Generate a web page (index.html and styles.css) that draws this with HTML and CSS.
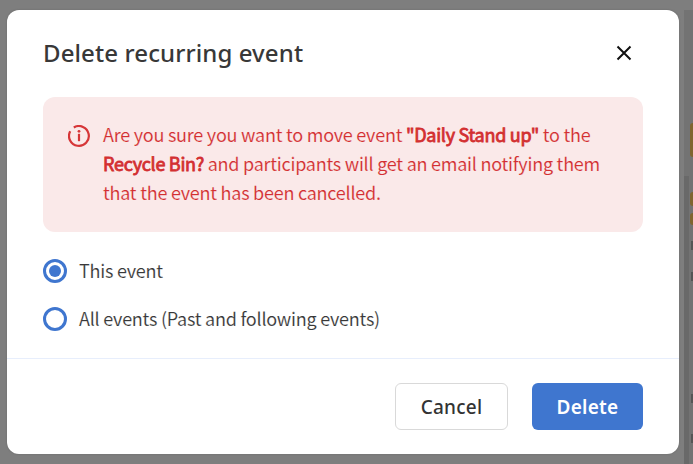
FILE: index.html
```html
<!DOCTYPE html>
<html lang="en">
<head>
<meta charset="utf-8">
<title>Delete recurring event</title>
<link rel="stylesheet" href="styles.css">
</head>
<body>
<div class="backdrop" aria-hidden="true">
  <i class="panel"></i><i class="divider"></i>
  <i class="chip chip-tall"></i><i class="chip chip-mid"></i><i class="chip chip-low"></i>
  <i class="mark mark-a"></i><i class="mark mark-b"></i><i class="mark mark-c"></i><i class="mark mark-d"></i>
</div>
<main class="dialog" role="dialog">
  <header class="header">
    <h1 class="title">Delete recurring event</h1>
    <button class="close" aria-label="Close"><svg width="16" height="16" viewBox="0 0 16 16"><path d="M1.5 1.5l13 13M14.5 1.5l-13 13" fill="none" stroke="#111" stroke-width="2"/></svg></button>
  </header>
  <section class="alert">
    <svg class="info" width="22" height="22" viewBox="0 0 22 22"><path d="M5.8 2.5A9.9 9.9 0 1 1 2.2 6.3" fill="none" stroke="#d63638" stroke-width="2.2"/><path d="M11 8.8v7.4" stroke="#d63638" stroke-width="2.2"/><circle cx="11" cy="6.3" r="1.4" fill="#d63638"/></svg>
    <p class="message"><span class="line">Are you sure you want to move event <b>"Daily Stand up"</b> to the</span> <span class="line"><b>Recycle Bin?</b> and participants will get an email notifying them</span> <span class="line">that the event has been cancelled.</span></p>
  </section>
  <div class="options">
    <label class="option"><span class="radio checked"></span><span>This event</span></label>
    <label class="option"><span class="radio"></span><span>All events (Past and following events)</span></label>
  </div>
  <footer class="footer">
    <button class="button cancel">Cancel</button>
    <button class="button delete">Delete</button>
  </footer>
</main>
</body>
</html>
```
FILE: styles.css
```css
* { box-sizing: border-box; }
body { margin: 0; width: 693px; height: 464px; overflow: hidden; background: #7e7e7e; padding: 10px 14px 10px 7px; font-family: "Noto Sans CJK SC", sans-serif; color: #383838; }
.backdrop i { position: absolute; }
.panel { left: 684px; top: 10px; width: 9px; height: 454px; background: #737373; }
.divider { left: 684px; top: 176px; width: 5px; height: 288px; background: #696969; }
.chip { left: 690px; width: 3px; background: #806530; border-radius: 3px 0 0 3px; }
.chip-tall { top: 123px; height: 34px; }
.chip-mid { top: 192px; height: 14px; }
.chip-low { top: 213px; height: 12px; }
.mark { left: 691px; width: 2px; height: 9px; background: #555; }
.mark-a { top: 241px; }
.mark-b { top: 272px; }
.mark-c { top: 394px; }
.mark-d { top: 434px; }
.dialog { position: relative; display: flex; flex-direction: column; width: 672px; height: 444px; background: #fff; border-radius: 12px; box-shadow: 0 0 2px #666; }
.header { height: 87px; padding: 0 47px 2px 36px; display: flex; align-items: center; justify-content: space-between; }
.title { margin: 0; font: 500 24px/36px "Noto Sans", sans-serif; letter-spacing: .1px; color: #383838; white-space: nowrap; }
button { font: inherit; padding: 0; }
.close { display: flex; border: 0; background: none; }
.alert { height: 135px; margin: 0 36px; padding: 23px 24px 24px; border-radius: 12px; background: #fae9e9; display: flex; gap: 13px; color: #d32f31; }
.info { flex: none; margin: 5px 0 0 1px; }
.message { margin: 0; font-size: 18px; line-height: 29px; font-weight: 400; letter-spacing: -.245px; -webkit-text-stroke: .12px #fae9e9; }
.message b { font-weight: 400; letter-spacing: -.28px; -webkit-text-stroke: .8px #d32f31; }
.line { display: block; width: max-content; white-space: nowrap; }
.options { display: flex; flex-direction: column; gap: 24px; padding: 27px 36px 0; height: 126px; }
.option { display: flex; align-items: center; gap: 12px; height: 24px; font-size: 18px; line-height: 24px; letter-spacing: -.24px; white-space: nowrap; -webkit-text-stroke: .12px #fff; }
.option span + span { padding-bottom: 2px; }
.radio { width: 24px; height: 24px; border: 3px solid #3f76cf; border-radius: 50%; display: grid; place-items: center; }
.checked::after { content: ""; width: 12px; height: 12px; border-radius: 50%; background: #3f76cf; }
.footer { height: 96px; border-top: 1px solid #e7eefc; padding: 24px 36px; display: flex; justify-content: flex-end; gap: 24px; }
.button { height: 47px; border-radius: 6px; padding-top: 2px; font: 500 19px/27px "Noto Sans", sans-serif; letter-spacing: .25px; }
.cancel { width: 113px; border: 1px solid #d9d9d9; background: #fff; color: #333; }
.delete { width: 111px; border: 0; background: #3f76cf; color: #fff; font-weight: 600; }
```
